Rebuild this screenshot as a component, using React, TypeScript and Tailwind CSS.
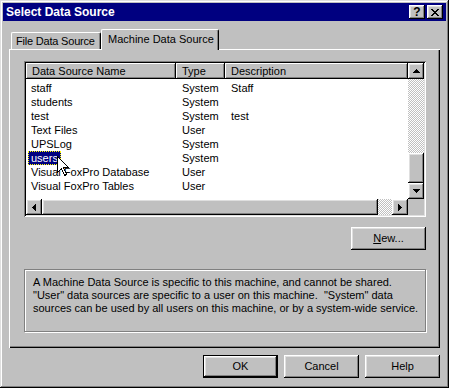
import React from "react";

const raised =
  "shadow-[inset_-1px_-1px_#000,inset_1px_1px_#fff,inset_-2px_-2px_#808080,inset_2px_2px_#dfdfdf]";
const checker =
  "[background-image:conic-gradient(#fff_25%,#c0c0c0_0_50%,#fff_0_75%,#c0c0c0_0)] [background-size:2px_2px]";

function Tri({ dir }: { dir: "up" | "down" | "left" | "right" }) {
  const pts =
    dir === "up"
      ? "3.5,0 7,4 0,4"
      : dir === "down"
      ? "0,0 7,0 3.5,4"
      : dir === "left"
      ? "4,0 4,7 0,3.5"
      : "0,0 4,3.5 0,7";
  const w = dir === "up" || dir === "down" ? 7 : 4;
  const h = dir === "up" || dir === "down" ? 4 : 7;
  return (
    <svg width={w} height={h} viewBox={`0 0 ${w} ${h}`} shapeRendering="crispEdges">
      <polygon points={pts} fill="#000" />
    </svg>
  );
}

function ScrollBtn({ dir }: { dir: "up" | "down" | "left" | "right" }) {
  return (
    <div className={`w-[16px] h-[16px] shrink-0 bg-[#c0c0c0] flex items-center justify-center ${raised}`}>
      <Tri dir={dir} />
    </div>
  );
}

const rows = [
  ["staff", "System", "Staff"],
  ["students", "System", ""],
  ["test", "System", "test"],
  ["Text Files", "User", ""],
  ["UPSLog", "System", ""],
  ["users", "System", ""],
  ["Visual FoxPro Database", "User", ""],
  ["Visual FoxPro Tables", "User", ""],
];

function Btn({ children, def }: { children: React.ReactNode; def?: boolean }) {
  if (def) {
    return (
      <div className="w-[75px] h-[23px] border border-black">
        <div className={`w-full h-full bg-[#c0c0c0] flex items-center justify-center ${raised}`}>
          {children}
        </div>
      </div>
    );
  }
  return (
    <div className={`w-[75px] h-[23px] bg-[#c0c0c0] flex items-center justify-center ${raised}`}>
      {children}
    </div>
  );
}

export default function App() {
  return (
    <div
      className="relative w-[449px] h-[388px] p-[3px] bg-[#c0c0c0] text-black text-[11px] leading-[13px] font-['Liberation_Sans',Arial,sans-serif] shadow-[inset_-1px_-1px_#000,inset_1px_1px_#dfdfdf,inset_-2px_-2px_#808080,inset_2px_2px_#fff] select-none"
    >
      {/* Title bar */}
      <div className="h-[18px] bg-[#000080] flex items-center pl-[3px] pr-[3px]">
        <div className="flex-1 text-white font-bold text-[12px] leading-[14px]">Select Data Source</div>
        <div className="flex gap-[2px]">
          <div className={`w-[16px] h-[14px] bg-[#c0c0c0] flex items-center justify-center font-bold text-[12px] leading-[12px] ${raised}`}>
            ?
          </div>
          <div className={`w-[16px] h-[14px] bg-[#c0c0c0] flex items-center justify-center ${raised}`}>
            <svg width="8" height="7" viewBox="0 0 8 7" shapeRendering="crispEdges">
              <path d="M0 0h2v1H0zM6 0h2v1H6zM1 1h2v1H1zM5 1h2v1H5zM2 2h4v1H2zM3 3h2v1H3zM2 4h4v1H2zM1 5h2v1H1zM5 5h2v1H5zM0 6h2v1H0zM6 6h2v1H6z" fill="#000" />
            </svg>
          </div>
        </div>
      </div>

      <div className="px-[6px] pt-[8px]">
        {/* Tabs */}
        <div className="h-[20px] flex pl-[2px]">
          <div className="self-end h-[17px] w-[90px] whitespace-nowrap border-t border-l border-white rounded-tl-[2px] rounded-tr-[2px] shadow-[inset_-1px_0_#808080] border-r border-r-black flex items-center pl-[4px] tracking-[-0.2px]">
            File Data Source
          </div>
          <div className="relative z-10 self-start h-[21px] w-[118px] whitespace-nowrap bg-[#c0c0c0] border-t border-l border-white border-r border-r-black rounded-tl-[2px] rounded-tr-[2px] shadow-[inset_-1px_0_#808080] flex items-center pl-[6px] pb-[1px]">
            Machine Data Source
          </div>
        </div>

        {/* Panel */}
        <div className="h-[299px] pt-[12px] pl-[15px] pr-[14px] shadow-[inset_1px_1px_#fff,inset_-1px_-1px_#000,inset_-2px_-2px_#808080]">
          {/* List view */}
          <div className="w-[402px] h-[156px] p-[2px] bg-white shadow-[inset_1px_1px_#808080,inset_-1px_-1px_#fff,inset_2px_2px_#000,inset_-2px_-2px_#dfdfdf]">
            <div className="flex h-[136px]">
              <div className="w-[382px] flex flex-col relative">
                <div className="flex h-[16px] bg-[#c0c0c0]">
                  <div className="w-[150px] pl-[6px] flex items-center shadow-[inset_-1px_-1px_#000,inset_1px_1px_#fff,inset_-2px_-2px_#808080]">
                    Data Source Name
                  </div>
                  <div className="w-[49px] pl-[6px] flex items-center shadow-[inset_-1px_-1px_#000,inset_1px_1px_#fff,inset_-2px_-2px_#808080]">
                    Type
                  </div>
                  <div className="flex-1 pl-[6px] flex items-center shadow-[inset_-1px_-1px_#000,inset_1px_1px_#fff,inset_-2px_-2px_#808080]">
                    Description
                  </div>
                </div>
                <div className="pt-[2px]">
                  {rows.map(([n, t, d]) => (
                    <div key={n} className="flex h-[14px] leading-[14px]">
                      <div className="w-[150px] pl-[2px] whitespace-nowrap">
                        {n === "users" ? (
                          <span className="inline-block h-[14px] px-[2px] bg-[#000080] text-white border border-dotted border-[#ffff00] leading-[12px]">
                            {n}
                          </span>
                        ) : (
                          <span className="pl-[3px]">{n}</span>
                        )}
                      </div>
                      <div className="w-[49px] pl-[6px]">{t}</div>
                      <div className="flex-1 pl-[6px]">{d}</div>
                    </div>
                  ))}
                </div>
              </div>
              <div className="w-[16px] flex flex-col">
                <ScrollBtn dir="up" />
                <div className={`h-[74px] ${checker}`} />
                <div className={`h-[30px] bg-[#c0c0c0] ${raised}`} />
                <ScrollBtn dir="down" />
              </div>
            </div>
            <div className="flex h-[16px]">
              <ScrollBtn dir="left" />
              <div className={`w-[336px] bg-[#c0c0c0] ${raised}`} />
              <div className={`w-[14px] ${checker}`} />
              <ScrollBtn dir="right" />
              <div className="w-[16px] bg-[#c0c0c0]" />
            </div>
          </div>

          {/* New button */}
          <div className="mt-[10px] flex justify-end">
            <Btn>
              <span>
                <span className="underline">N</span>ew...
              </span>
            </Btn>
          </div>

          {/* Info box */}
          <div className="mt-[19px] h-[63px] border border-[#808080] shadow-[inset_1px_1px_#fff,1px_1px_#fff] pl-[8px] pt-[6px] leading-[13px]">
            <div>A Machine Data Source is specific to this machine, and cannot be shared.</div>
            <div>"User" data sources are specific to a user on this machine. &nbsp;"System" data</div>
            <div>sources can be used by all users on this machine, or by a system-wide service.</div>
          </div>
        </div>

        {/* Bottom buttons */}
        <div className="mt-[7px] flex justify-end gap-[6px]">
          <Btn def>OK</Btn>
          <Btn>Cancel</Btn>
          <Btn>Help</Btn>
        </div>
      </div>

      {/* Mouse cursor */}
      <svg
        className="absolute left-[57px] top-[156px] pointer-events-none"
        width="13"
        height="21"
        viewBox="0 0 13 21"
        shapeRendering="crispEdges"
      >
        <path
          d="M0.5 0.5 L0.5 16.5 L4.5 12.5 L7.5 19.5 L9.5 18.5 L6.5 11.5 L11.5 11.5 Z"
          fill="#fff"
          stroke="#000"
          strokeWidth="1"
        />
      </svg>
    </div>
  );
}
